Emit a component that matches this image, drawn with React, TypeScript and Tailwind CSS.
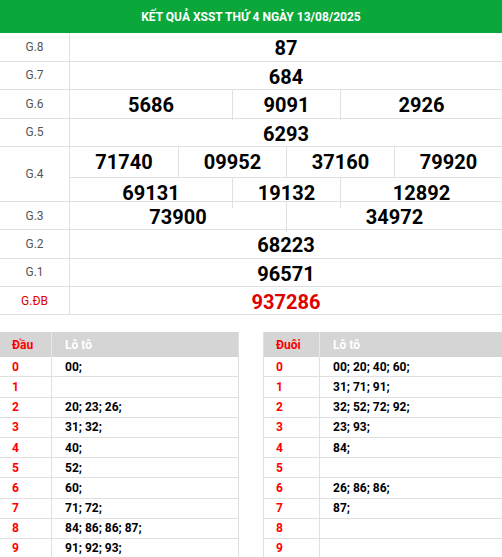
const ROWS: { label: string; nums: string[]; spans: string[]; red?: boolean }[] = [
  { label: "G.8", nums: ["87"], spans: ["col-span-8"] },
  { label: "G.7", nums: ["684"], spans: ["col-span-8"] },
  { label: "G.6", nums: ["5686", "9091", "2926"], spans: ["col-span-3", "col-span-2", "col-span-3"] },
  { label: "G.5", nums: ["6293"], spans: ["col-span-8"] },
];

const LOWER: { label: string; nums: string[]; spans: string[]; red?: boolean }[] = [
  { label: "G.3", nums: ["73900", "34972"], spans: ["col-span-4", "col-span-4"] },
  { label: "G.2", nums: ["68223"], spans: ["col-span-8"] },
  { label: "G.1", nums: ["96571"], spans: ["col-span-8"] },
  { label: "G.ĐB", nums: ["937286"], spans: ["col-span-8"], red: true },
];

const DAU = ["00;", "", "20; 23; 26;", "31; 32;", "40;", "52;", "60;", "71; 72;", "84; 86; 86; 87;", "91; 92; 93;"];
const DUOI = ["00; 20; 40; 60;", "31; 71; 91;", "32; 52; 72; 92;", "23; 93;", "84;", "", "26; 86; 86;", "87;", "", ""];

function Row({ label, nums, spans, red, h }: { label: string; nums: string[]; spans: string[]; red?: boolean; h: string }) {
  return (
    <div className={`flex ${h} border-b border-[#e0e0e0]`}>
      <div className={`w-[70px] shrink-0 border-r border-[#e0e0e0] flex items-center justify-center text-[12px] ${red ? "text-[#e00000]" : "text-[#555]"}`}>
        {label}
      </div>
      <div className="flex-1 grid grid-cols-8">
        {nums.map((n, i) => (
          <div
            key={i}
            className={`${spans[i]} flex items-center justify-center text-[20px] font-bold ${red ? "text-[#e00000]" : "text-black"} ${i > 0 ? "border-l border-[#e0e0e0]" : ""}`}
          >
            {n}
          </div>
        ))}
      </div>
    </div>
  );
}

function LotoTable({ title, data, firstW, className }: { title: string; data: string[]; firstW: string; className: string }) {
  return (
    <div className={className}>
      <div className="flex h-[25px] bg-[#d5d5d5] text-[12px] font-bold">
        <div className={`${firstW} shrink-0 pl-[12px] flex items-center text-[#ff0000] border-r border-[#e8e8e8]`}>{title}</div>
        <div className="flex-1 pl-[13px] flex items-center text-white">Lô tô</div>
      </div>
      {data.map((v, i) => (
        <div key={i} className="flex h-[20.2px] border-b border-[#e0e0e0] text-[12px] font-bold">
          <div className={`${firstW} shrink-0 pl-[12px] flex items-center text-[#ff0000] border-r border-[#e0e0e0]`}>{i}</div>
          <div className="flex-1 pl-[13px] flex items-center text-black">{v}</div>
        </div>
      ))}
    </div>
  );
}

export default function App() {
  return (
    <div className="w-[502px] h-[557px] overflow-hidden bg-white font-['Roboto',sans-serif]">
      <div className="h-[33px] bg-[#0aa83b] flex items-center justify-center text-white font-bold text-[12px]">
        KẾT QUẢ XSST THỨ 4 NGÀY 13/08/2025
      </div>

      {ROWS.map((r) => (
        <Row key={r.label} {...r} h="h-[28.5px]" />
      ))}

      {/* G.4 */}
      <div className="flex h-[55px] border-b border-[#e0e0e0]">
        <div className="w-[70px] shrink-0 border-r border-[#e0e0e0] flex items-center justify-center text-[12px] text-[#555]">G.4</div>
        <div className="flex-1 flex flex-col">
          <div className="flex-1 grid grid-cols-4 border-b border-[#e0e0e0]">
            {["71740", "09952", "37160", "79920"].map((n, i) => (
              <div key={n} className={`flex items-center justify-center text-[20px] font-bold ${i > 0 ? "border-l border-[#e0e0e0]" : ""}`}>{n}</div>
            ))}
          </div>
          <div className="flex-1 grid grid-cols-8">
            {["69131", "19132", "12892"].map((n, i) => (
              <div key={n} className={`${i === 1 ? "col-span-2" : "col-span-3"} flex items-center justify-center text-[20px] font-bold ${i > 0 ? "border-l border-[#e0e0e0]" : ""}`}>{n}</div>
            ))}
          </div>
        </div>
      </div>

      {LOWER.map((r) => (
        <Row key={r.label} {...r} h="h-[28.3px]" />
      ))}

      <div className="flex mt-[17px]">
        <LotoTable title="Đầu" data={DAU} firstW="w-[52px]" className="w-[239px] border-r border-[#e0e0e0]" />
        <div className="w-[24px]" />
        <LotoTable title="Đuôi" data={DUOI} firstW="w-[56px]" className="flex-1 border-l border-[#e0e0e0]" />
      </div>
    </div>
  );
}
